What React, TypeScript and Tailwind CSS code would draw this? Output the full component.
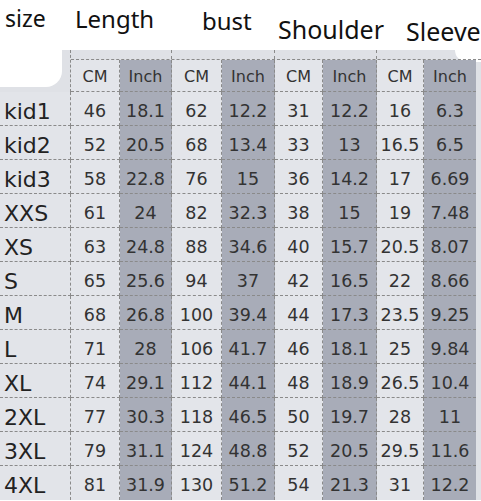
import React from "react";

const rows: string[][] = [
    ["kid1", "46", "18.1", "62", "12.2", "31", "12.2", "16", "6.3"],
    ["kid2", "52", "20.5", "68", "13.4", "33", "13", "16.5", "6.5"],
    ["kid3", "58", "22.8", "76", "15", "36", "14.2", "17", "6.69"],
    ["XXS", "61", "24", "82", "32.3", "38", "15", "19", "7.48"],
    ["XS", "63", "24.8", "88", "34.6", "40", "15.7", "20.5", "8.07"],
    ["S", "65", "25.6", "94", "37", "42", "16.5", "22", "8.66"],
    ["M", "68", "26.8", "100", "39.4", "44", "17.3", "23.5", "9.25"],
    ["L", "71", "28", "106", "41.7", "46", "18.1", "25", "9.84"],
    ["XL", "74", "29.1", "112", "44.1", "48", "18.9", "26.5", "10.4"],
    ["2XL", "77", "30.3", "118", "46.5", "50", "19.7", "28", "11"],
    ["3XL", "79", "31.1", "124", "48.8", "52", "20.5", "29.5", "11.6"],
    ["4XL", "81", "31.9", "130", "51.2", "54", "21.3", "31", "12.2"],
];

const widths = ["w-[71px]", "w-[49px]", "w-[52px]", "w-[50px]", "w-[53px]", "w-[48px]", "w-[54px]", "w-[47px]", "w-[52px]"];
const groups = ["w-[101px]", "w-[103px]", "w-[102px]", "w-[104px]"];

const dejavu = "font-['DejaVu_Sans',sans-serif]";

export default function App() {
    return (
        <div className="w-[481px] h-[501px] overflow-hidden bg-white font-['Noto_Sans',sans-serif]">

            {/* titles */}
            <div className="flex h-[50px] text-[#111] leading-none">
                <span className="ml-[5px] w-[70px] pt-[7px] text-[23px]">size</span>
                <span className="w-[127px] pt-[7px] text-[24px]">Length</span>
                <span className="w-[76px] pt-[9px] text-[24px]">bust</span>
                <span className="w-[128px] pt-[17px] text-[25px]">Shoulder</span>
                <span className="pt-[19px] text-[25px] whitespace-nowrap">Sleeve</span>
            </div>

            <div className="bg-[#dfe1e6]">
                {/* strip + header */}
                <div className="flex">
                    <div className="w-[71px] h-[42px] border-r border-dashed border-[#8a8a8a]">
                        <div className="w-[62px] h-[37px] bg-white rounded-br-[16px]"/>
                    </div>
                    <div className="flex flex-col">
                        <div className="flex h-[9px]">
                            {groups.map((w, i) => (
                                <div key={i}
                                     className={`${w} h-full ${i < 3 ? 'border-r border-dashed border-[#8a8a8a]' : 'flex justify-end'}`}>
                                    {i === 3 ? <div className="w-[26px] h-[12px] bg-white rounded-bl-[12px]"/> : null}
                                </div>
                            ))}
                        </div>
                        <div className={`flex h-[33px] border-t border-dashed border-[#8a8a8a] text-[16px] text-[#333] ${dejavu}`}>
                            {widths.slice(1).map((w, i) => (
                                <div key={i}
                                     className={`${w} h-full flex items-center justify-center pt-[3px] border-b border-dashed border-[#8a8a8a] ${i % 2 === 0 ? 'bg-[#e3e5ea] border-r' : 'bg-[#a8acb8] border-r'} ${i === 7 ? 'border-r-0' : ''}`}>
                                    {i % 2 === 0 ? 'CM' : 'Inch'}
                                </div>
                            ))}
                        </div>
                    </div>
                </div>

                {/* data rows */}
                {rows.map((row, r) => (
                    <div key={r} className={`flex h-[34px] text-[#333] ${dejavu}`}>
                        {row.map((v, c) => (
                            <div key={c}
                                 className={`${widths[c]} h-full flex items-center pt-[5px] border-dashed border-[#8a8a8a] ${r < 11 ? 'border-b' : ''} ${c < 8 ? 'border-r' : ''} ${c === 0 ? 'bg-[#e2e4e9] pl-[4px] text-[22px] text-[#222]' : 'justify-center text-[17.5px]'} ${c > 0 && c % 2 === 0 ? 'bg-[#a8acb8]' : ''} ${c > 0 && c % 2 === 1 ? 'bg-[#e3e5ea]' : ''}`}>
                                {v}
                            </div>
                        ))}
                    </div>
                ))}
            </div>
        </div>
    )
}
